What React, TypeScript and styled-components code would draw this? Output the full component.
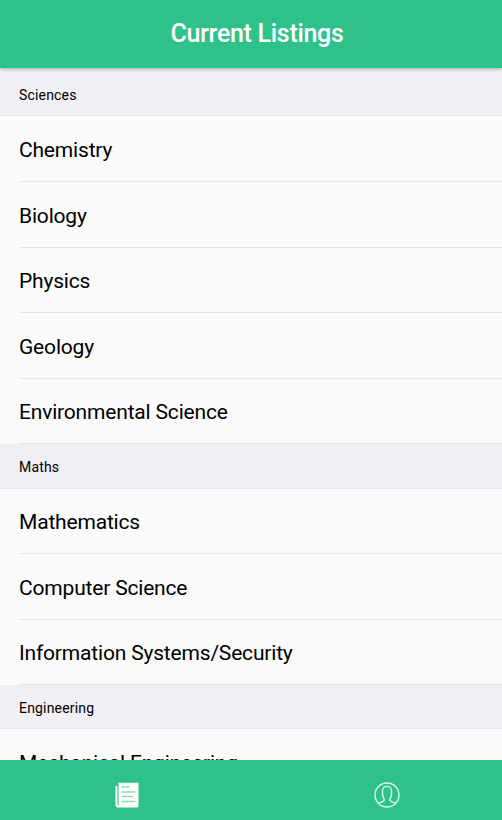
import React from 'react';
import styled, { createGlobalStyle } from 'styled-components';

const GlobalStyle = createGlobalStyle`
  * { box-sizing: border-box; }
  body { margin: 0; font-family: Roboto, sans-serif; color: #000; }
`;

const Screen = styled.div`
  height: 820px;
  display: flex;
  flex-direction: column;
  overflow: hidden;
  background: #fafafa;
`;

const Header = styled.header`
  flex: none;
  height: 68px;
  display: flex;
  align-items: center;
  justify-content: center;
  padding: 0 0 0 12px;
  background: #2ec28a;
  box-shadow: 0 1px 4px rgba(0, 0, 0, 0.3);
  z-index: 1;
`;

const Title = styled.h1`
  margin: 0;
  font-size: 25px;
  font-weight: 500;
  letter-spacing: -0.3px;
  line-height: 30px;
  color: #fff;
`;

const List = styled.main`
  flex: 1;
  min-height: 0;
  overflow: hidden;
  padding-top: 4.4px;
  background: linear-gradient(#efeff4 6px, #fafafa 6px);
`;

const SectionTitle = styled.h2`
  margin: 0;
  height: 44.1px;
  display: flex;
  align-items: center;
  padding: 1.6px 0 0 19px;
  font-size: 14px;
  font-weight: 400;
  letter-spacing: 0.18px;
  background: #efeff4;
  border-bottom: 1px solid #e6e6e9;
`;

const Row = styled.div`
  height: 65.6px;
  margin-left: 19px;
  padding-top: 2.6px;
  display: flex;
  align-items: center;
  font-size: 21px;
  letter-spacing: -0.18px;
  border-bottom: 1px solid #e5e5e7;
`;

const TabBar = styled.nav`
  flex: none;
  height: 60px;
  display: grid;
  grid-template-columns: 254px 1fr;
  background: #2ec28a;
`;

const Tab = styled.button<{ $shift: number }>`
  border: 0;
  padding: 10px 0 0 ${(p) => p.$shift}px;
  background: none;
  display: flex;
  align-items: center;
  justify-content: center;
`;

const Icon = styled.svg`
  display: block;
  width: 28px;
  height: 28px;
`;

const ListingsIcon = () => (
  <Icon viewBox="0 0 28 28" fill="none">
    <path d="M3 5.5V25.5H5.2V5.5Z" fill="#a6e4cb" />
    <path d="M2.7 5H4.3V24.4L5.5 25V1.7H25.5V25.2L24.3 26.5H4.3L2.5 24.7V5Z" fill="#fff" />
    <path d="M4.8 5V23.5" stroke="#70d2ad" strokeWidth="1" />
    <path d="M8.5 6H16.5M8.5 11H22.5M8.5 15.5H20M8.5 20.5H22.5" stroke="#91dcbf" strokeWidth="1.6" />
  </Icon>
);

const ProfileIcon = () => (
  <Icon viewBox="0 0 28 28" fill="none" stroke="#e0f5ed" strokeWidth="1.35">
    <circle cx="14" cy="14" r="12" />
    <path d="M5.3 22.2C7 20.8 11.2 21 11.2 18.9C11.2 17 9.5 16.2 9.5 13.2V10C9.5 3.9 18.5 3.9 18.5 10V13.2C18.5 16.2 16.8 17 16.8 18.9C16.8 21 21 20.8 22.7 22.2" />
  </Icon>
);

const sections = [
  { title: 'Sciences', items: ['Chemistry', 'Biology', 'Physics', 'Geology', 'Environmental Science'] },
  { title: 'Maths', items: ['Mathematics', 'Computer Science', 'Information Systems/Security'] },
  { title: 'Engineering', items: ['Mechanical Engineering'] },
];

export default function App() {
  return (
    <Screen>
      <GlobalStyle />
      <Header><Title>Current Listings</Title></Header>
      <List>
        {sections.map((s) => (
          <section key={s.title}>
            <SectionTitle>{s.title}</SectionTitle>
            {s.items.map((i) => <Row key={i}>{i}</Row>)}
          </section>
        ))}
      </List>
      <TabBar>
        <Tab $shift={0} aria-label="Listings"><ListingsIcon /></Tab>
        <Tab $shift={18} aria-label="Profile"><ProfileIcon /></Tab>
      </TabBar>
    </Screen>
  );
}
